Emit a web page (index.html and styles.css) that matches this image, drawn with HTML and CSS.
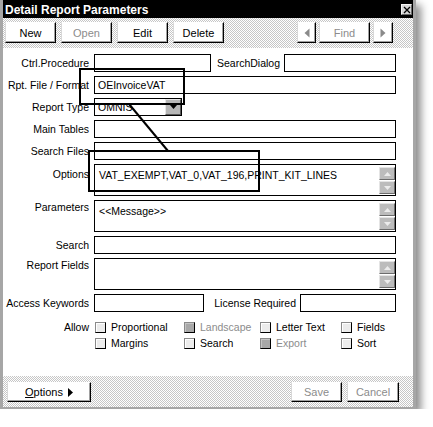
FILE: index.html
```html
<!DOCTYPE html>
<html>
<head>
<meta charset="utf-8">
<title>Detail Report Parameters</title>
<link rel="stylesheet" href="styles.css">
</head>
<body>
<div class="win">
  <div class="title">
    <span class="title-text">Detail Report Parameters</span>
    <span class="close"><svg width="8" height="8" viewBox="0 0 8 8"><path d="M1 1L7 7M7 1L1 7" stroke="#000" stroke-width="1.3" fill="none"/></svg></span>
  </div>
  <div class="toolbar">
    <div class="btn">New</div>
    <div class="btn dis">Open</div>
    <div class="btn">Edit</div>
    <div class="btn">Delete</div>
    <div class="spacer"></div>
    <div class="btn arrow"><svg width="6" height="10" viewBox="0 0 6 10"><path d="M5.5 0.5V9.5L0.5 5Z" fill="#8a8a8a"/></svg></div>
    <div class="btn dis">Find</div>
    <div class="btn arrow arrow-r"><svg width="6" height="10" viewBox="0 0 6 10"><path d="M0.5 0.5V9.5L5.5 5Z" fill="#8a8a8a"/></svg></div>
  </div>
  <div class="content">
    <div class="row">
      <div class="lbl">Ctrl.Procedure</div>
      <div class="field w-proc"></div>
      <div class="lbl-mid">SearchDialog</div>
      <div class="field w-dialog"></div>
    </div>
    <div class="row">
      <div class="lbl">Rpt. File / Format</div>
      <div class="field grow">OEInvoiceVAT</div>
    </div>
    <div class="row">
      <div class="lbl">Report Type</div>
      <div class="combo">
        <span class="combo-text">OMNIS</span>
        <span class="combo-btn"><svg width="7" height="4" viewBox="0 0 7 4"><path d="M0 0H7L3.5 4Z" fill="#000"/></svg></span>
      </div>
    </div>
    <div class="row">
      <div class="lbl">Main Tables</div>
      <div class="field grow"></div>
    </div>
    <div class="row">
      <div class="lbl">Search Files</div>
      <div class="field grow"></div>
    </div>
    <div class="row">
      <div class="lbl lbl-options">Options</div>
      <div class="area">
        <div class="area-text">VAT_EXEMPT,VAT_0,VAT_196,PRINT_KIT_LINES</div>
        <div class="scroll">
          <span class="sbtn"><svg width="7" height="4" viewBox="0 0 7 4"><path d="M0 4H7L3.5 0Z" fill="#ececec"/></svg></span>
          <span class="sbtn"><svg width="7" height="4" viewBox="0 0 7 4"><path d="M0 0H7L3.5 4Z" fill="#ececec"/></svg></span>
        </div>
      </div>
    </div>
    <div class="row">
      <div class="lbl lbl-top">Parameters</div>
      <div class="area">
        <div class="area-text">&lt;&lt;Message&gt;&gt;</div>
        <div class="scroll">
          <span class="sbtn"><svg width="7" height="4" viewBox="0 0 7 4"><path d="M0 4H7L3.5 0Z" fill="#ececec"/></svg></span>
          <span class="sbtn"><svg width="7" height="4" viewBox="0 0 7 4"><path d="M0 0H7L3.5 4Z" fill="#ececec"/></svg></span>
        </div>
      </div>
    </div>
    <div class="row">
      <div class="lbl">Search</div>
      <div class="field grow"></div>
    </div>
    <div class="row">
      <div class="lbl lbl-top">Report Fields</div>
      <div class="area">
        <div class="area-text"></div>
        <div class="scroll">
          <span class="sbtn"><svg width="7" height="4" viewBox="0 0 7 4"><path d="M0 4H7L3.5 0Z" fill="#ececec"/></svg></span>
          <span class="sbtn"><svg width="7" height="4" viewBox="0 0 7 4"><path d="M0 0H7L3.5 4Z" fill="#ececec"/></svg></span>
        </div>
      </div>
    </div>
    <div class="row">
      <div class="lbl">Access Keywords</div>
      <div class="field w-keys"></div>
      <div class="lbl-mid">License Required</div>
      <div class="field w-license"></div>
    </div>
    <div class="row allow-row">
      <div class="lbl lbl-allow">Allow</div>
      <div class="checks">
        <div class="cb"><span class="box"></span>Proportional</div>
        <div class="cb dis"><span class="box"></span>Landscape</div>
        <div class="cb"><span class="box"></span>Letter Text</div>
        <div class="cb"><span class="box"></span>Fields</div>
        <div class="cb"><span class="box"></span>Margins</div>
        <div class="cb"><span class="box"></span>Search</div>
        <div class="cb dis"><span class="box"></span>Export</div>
        <div class="cb"><span class="box"></span>Sort</div>
      </div>
    </div>
  </div>
  <div class="footer">
    <div class="btn btn-options"><span><u>O</u>ptions</span><svg width="5" height="9" viewBox="0 0 5 9"><path d="M0 0V9L5 4.5Z" fill="#000"/></svg></div>
    <div class="spacer"></div>
    <div class="btn dis">Save</div>
    <div class="btn dis btn-cancel">Cancel</div>
  </div>
  <svg class="annot" width="410" height="407" viewBox="3 0 410 407">
    <rect x="80" y="69" width="104" height="35" fill="none" stroke="#000" stroke-width="2"/>
    <rect x="89" y="151" width="170" height="40" fill="none" stroke="#000" stroke-width="2"/>
    <line x1="129" y1="104" x2="168" y2="151" stroke="#000" stroke-width="2"/>
  </svg>
</div>
</body>
</html>
```

FILE: styles.css
```css
* {
  box-sizing: border-box;
}

html, body {
  margin: 0;
  padding: 0;
  background: #fff;
}

body {
  font-family: "Liberation Sans", Arial, sans-serif;
  font-size: 10.5px;
  color: #000;
}

.win {
  position: relative;
  width: 416px;
  height: 409px;
  display: flex;
  flex-direction: column;
  background: #fff;
  border-left: 3px solid #a6a6a6;
  border-right: 3px solid #a6a6a6;
  border-bottom: 2px solid #a6a6a6;
  box-shadow: 5px 5px 8px rgba(0, 0, 0, 0.45);
}

.title {
  height: 18px;
  flex: none;
  background: #000;
  color: #fff;
  display: flex;
  align-items: flex-start;
  padding: 3px 0 0 2px;
}

.title-text {
  font-weight: bold;
  font-size: 12px;
  line-height: 14px;
  flex: 1;
}

.close {
  width: 11px;
  height: 11px;
  margin: 1px 1px 0 0;
  background: #d6d6d6;
  border: 1px solid;
  border-color: #f4f4f4 #6a6a6a #6a6a6a #f4f4f4;
  display: flex;
  align-items: center;
  justify-content: center;
}

.toolbar,
.footer {
  flex: none;
  display: flex;
  align-items: flex-start;
  gap: 5px;
  background-color: #fff;
  background-image: conic-gradient(#c6c6c6 25%, transparent 0 50%, #c6c6c6 0 75%, transparent 0);
  background-size: 2px 2px;
}

.toolbar {
  height: 30px;
  padding: 4px 20px 0 2px;
}

.spacer {
  flex: 1;
}

.btn {
  width: 51px;
  height: 21px;
  background: #fff;
  border: 1px solid;
  border-color: #fff #000 #000 #d8d8d8;
  box-shadow: inset -1px -1px 0 #a0a0a0;
  display: flex;
  align-items: center;
  justify-content: center;
  white-space: nowrap;
  font-size: 11px;
}

.btn.dis {
  color: #8c8c8c;
}

.btn.arrow {
  width: 19px;
  margin-right: -2px;
}

.btn.arrow-r {
  width: 20px;
  margin-left: -2px;
  margin-right: 0;
}

.content {
  flex: 1;
  display: flex;
  flex-direction: column;
  gap: 4px;
  padding: 6px 17px 0 0;
}

.row {
  display: flex;
  align-items: flex-start;
}

.lbl {
  width: 86px;
  margin-right: 5px;
  text-align: right;
  line-height: 18px;
  white-space: nowrap;
}

.lbl-top {
  line-height: 15px;
}

.lbl-options {
  line-height: 15px;
  padding-top: 3px;
}

.lbl-mid {
  flex: 1;
  text-align: right;
  line-height: 18px;
  padding-right: 4px;
  white-space: nowrap;
}

.field {
  height: 18px;
  border: 1px solid #000;
  background: #fff;
  padding-left: 3px;
  line-height: 16px;
  white-space: nowrap;
}

.grow {
  flex: 1;
}

.w-proc {
  width: 117px;
}

.w-dialog {
  width: 112px;
}

.w-keys {
  width: 110px;
}

.w-license {
  width: 96px;
}

.combo {
  width: 88px;
  height: 18px;
  border: 1px solid #000;
  display: flex;
  align-items: flex-start;
}

.combo-text {
  flex: 1;
  padding-left: 3px;
  line-height: 16px;
}

.combo-btn {
  width: 16px;
  height: 16px;
  background: #b6b6b6;
  border: 1px solid;
  border-color: #e6e6e6 #5a5a5a #5a5a5a #e6e6e6;
  display: flex;
  align-items: center;
  justify-content: center;
}

.area {
  flex: 1;
  height: 32px;
  border: 1px solid #000;
  display: flex;
}

.area-text {
  flex: 1;
  padding: 4px 0 0 4px;
  line-height: 13px;
  white-space: nowrap;
}

.scroll {
  width: 16px;
  padding-top: 2px;
  display: flex;
  flex-direction: column;
  gap: 1px;
}

.sbtn {
  width: 16px;
  height: 13px;
  background: #bcbcbc;
  border: 1px solid;
  border-color: #e4e4e4 #6c6c6c #6c6c6c #e4e4e4;
  display: flex;
  align-items: center;
  justify-content: center;
}

.allow-row {
  margin-top: 3px;
}

.lbl-allow {
  line-height: 16px;
  margin-right: 6px;
}

.checks {
  display: grid;
  grid-template-columns: 89px 76px 81px auto;
  grid-auto-rows: 16px;
}

.cb {
  display: flex;
  align-items: center;
  gap: 5px;
  white-space: nowrap;
}

.cb.dis {
  color: #8c8c8c;
}

.box {
  width: 11px;
  height: 11px;
  flex: none;
  background: #ececec;
  border: 1px solid;
  border-color: #8a8a8a #000 #000 #8a8a8a;
  box-shadow: inset 1px 1px 0 #fff;
}

.cb.dis .box {
  background: #a8a8a8;
  box-shadow: inset 1px 1px 0 #c4c4c4;
}

.footer {
  height: 31px;
  padding: 6px 14px 0 4px;
}

.footer .btn {
  height: 20px;
}

.btn-options {
  width: 84px;
  gap: 5px;
}

.btn-cancel {
  width: 52px;
}

.annot {
  position: absolute;
  left: 0;
  top: 0;
  pointer-events: none;
}
```
